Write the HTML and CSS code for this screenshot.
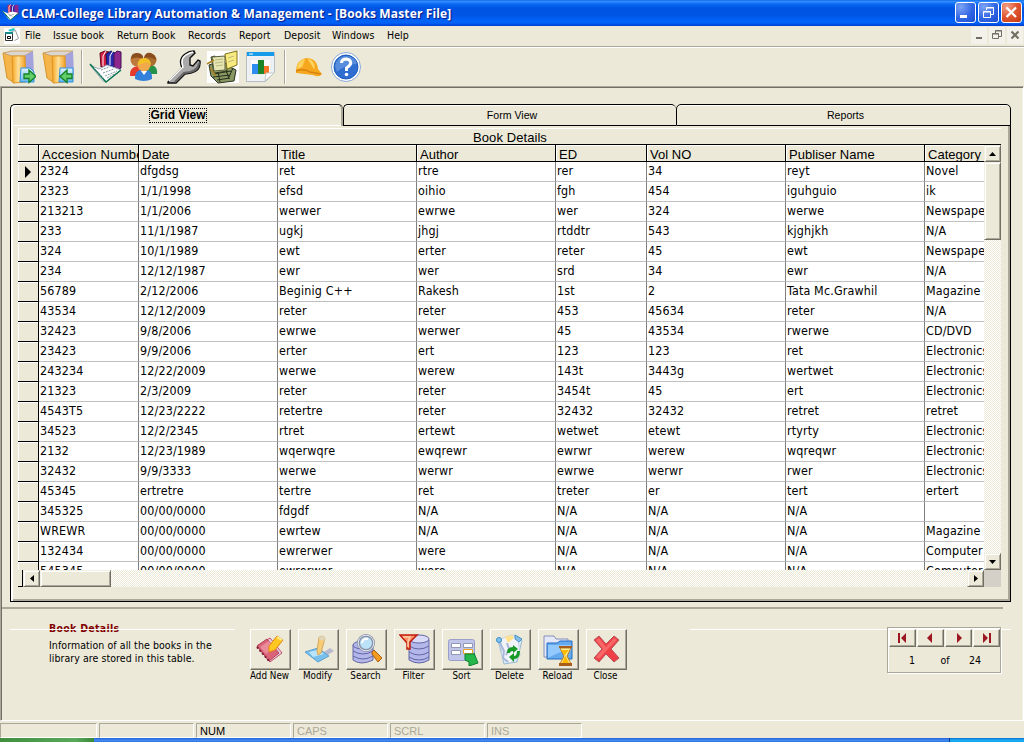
FILE: index.html
```html
<!DOCTYPE html>
<html lang="en">
<head>
<meta charset="utf-8">
<title>CLAM-College Library Automation &amp; Management</title>
<link rel="stylesheet" href="styles.css">
</head>
<body>
<div class="window">
<header class="titlebar">
  <svg class="app-icon" width="17" height="17" viewBox="0 0 34 34"><path d="M11 3l5-2 4 1v16l-8-1z" fill="#d51c40"/><path d="M17 4l5-3 4 2v16l-8-2z" fill="#2927ac"/><path d="M25 4l3-3 5 2v18l-8 2z" fill="#8c278e"/><path d="M17 1l-3 5v10M24 1l-3 5v9" stroke="#fff" stroke-width="1.500" fill="none"/><path d="M1 14l9 4 11-3 12 3-16 14-3-1z" fill="#fff"/><path d="M1 14l16 18 16-14" fill="none" stroke="#06764e" stroke-width="2"/><path d="M11 19l10 6M14 24l10-4" stroke="#899" stroke-width="1.500"/></svg>
  <span class="title">CLAM-College Library Automation &amp; Management - [Books Master File]</span>
  <div class="caption-buttons">
    <span class="cap"><svg width="19" height="19"><path d="M4 12h7v3H4z" fill="#fff"/></svg></span>
    <span class="cap"><svg width="19" height="19" fill="none" stroke="#fff"><path d="M7.500 7V4.500h7v7H12M7 5h8M4.500 8.500h7v6h-7zM4 9h8"/></svg></span>
    <span class="cap cap-close"><svg width="19" height="19"><path d="M4.500 4.500l9.500 9.500M14 4.500L4.500 14" stroke="#fff" stroke-width="2.300"/></svg></span>
  </div>
</header>
<nav class="menubar">
  <svg class="doc-icon" width="16" height="16"><path fill="#fff" d="M0 0h16v16H0z"/><path d="M7.500 3.500l4-1 3 8-4 2" fill="#fff" stroke="#999"/><path d="M4 2l6-2 1 2-5 1.500z" fill="#20c8c8"/><path d="M1.500 4.500h7v8h-7z" fill="#fff" stroke="#333"/><path d="M1 4h8v2H1z" fill="#178a8a"/><path d="M3.500 8.500h3v2h-3z" fill="#fff" stroke="#000"/></svg>
  <div class="menus"><span>File</span><span>Issue book</span><span>Return Book</span><span>Records</span><span>Report</span><span>Deposit</span><span>Windows</span><span>Help</span></div>
  <div class="mdi">
    <span><svg width="16" height="16"><path d="M5 10h6v2H5z" fill="#716f64"/></svg></span>
    <span><svg width="16" height="16" fill="none" stroke="#716f64"><path d="M6.500 6V3.500h6v6H10M6 4h7M3.500 6.500h6v5h-6zM3 7h7"/></svg></span>
    <span><svg width="16" height="16"><path d="M4.500 4.500l7 7M11.500 4.500l-7 7" stroke="#716f64" stroke-width="2.200"/></svg></span>
  </div>
</nav>
<div class="toolbar">
  <svg width="34" height="34" viewBox="0 0 34 34"><defs><linearGradient id="or" x2="1" y2="0"><stop stop-color="#f5a31c"/><stop offset=".45" stop-color="#ffe09a"/><stop offset="1" stop-color="#f09a18"/></linearGradient><linearGradient id="bl" x2="0" y2="1"><stop stop-color="#e0f4ff"/><stop offset="1" stop-color="#66b5ee"/></linearGradient></defs><path d="M1 3l10 3v26l-6-4z" fill="#f6b54a" stroke="#d99428"/><path d="M1 3l9-2h21l-9 5H10z" fill="#dcd6d2" stroke="#c9a568"/><path d="M22 6l9-5 1 23-10 8z" fill="#a3a2dc"/><path d="M10 6h13l1 26-13 1z" fill="url(#or)" stroke="#dd9826"/><path d="M19 18h9l4 4v10H18z" fill="url(#bl)" stroke="#2b91e0"/><path d="M22 24h5v-4l7 6.500-7 6v-4h-5z" fill="#63cd68" stroke="#128229" stroke-width="1.300"/></svg>
  <svg width="34" height="34" viewBox="0 0 34 34"><path d="M1 3l10 3v26l-6-4z" fill="#f6b54a" stroke="#d99428"/><path d="M1 3l9-2h21l-9 5H10z" fill="#dcd6d2" stroke="#c9a568"/><path d="M22 6l9-5 1 23-10 8z" fill="#a3a2dc"/><path d="M10 6h13l1 26-13 1z" fill="url(#or)" stroke="#dd9826"/><path d="M18 18h13v14H17z" fill="url(#bl)" stroke="#2b91e0"/><path d="M30 24h-5v-4l-7 6.500 7 6v-4h5z" fill="#63cd68" stroke="#128229" stroke-width="1.300"/></svg>
  <i class="sep"></i>
  <svg width="34" height="34" viewBox="0 0 34 34"><path d="M11 3l5-2 4 1v16l-8-1z" fill="#d51c40" stroke="#600820"/><path d="M17 4l5-3 4 2v16l-8-2z" fill="#2927ac" stroke="#171650"/><path d="M25 4l3-3 4 1v16l-7 4z" fill="#8c278e" stroke="#451055"/><path d="M17 1l-3 5v10M24 1l-3 5v9" stroke="#fff" fill="none"/><path d="M1 15l9 4 8-4 14 5-15 12-3-1z" fill="#fff" stroke="#9ab"/><path d="M1 14l16 18 15-12" fill="none" stroke="#06764e" stroke-width="1.500"/><path d="M12 20l8-3M14 23l11-4M16 26l12-5M18 28l9-5M5 18l9 10" stroke="#899" fill="none" stroke-dasharray="2 1"/></svg>
  <svg width="32" height="34" viewBox="0 0 32 34"><path d="M2 26q-1-9 8-10 7 1 8 10z" fill="#e53c2b"/><path d="M16 24q1-9 8-9 6 2 5 9z" fill="#249248"/><circle cx="9" cy="10" r="6.500" fill="#be7a3b"/><circle cx="22" cy="10" r="6.500" fill="#ab6d30"/><path d="M3 9q0-7 7-6 6 1 5 6-6-3-12 0M16 8q1-6 7-5 5 2 5 7-6-4-12-2" fill="#8b4d1d"/><path d="M7 29q-1-9 9-10 9 1 8 10-8 4-17 0" fill="#3380da"/><circle cx="16" cy="15" r="6.500" fill="#f2a94e"/><path d="M10 15q0-8 7-7 6 1 6 7l-4-3z" fill="#f2c126"/><path d="M13 21l3 4 3-4" fill="#fff"/></svg>
  <svg width="34" height="34" viewBox="0 0 34 34"><path d="M1 32L15 18q-4-9 3-14 4-3 9-3l1 2-5 5v7l3 1 5-6 2 1q1 10-9 12l-6 1-9 9H1z" fill="#a9a9a9" stroke="#111" stroke-width="1.400"/><path d="M2 31l14-14q-3-8 3-12 3-2 7-3" stroke="#fff" stroke-width="1.500" fill="none"/><path d="M8 32l9-9 6-1q8-2 9-9" stroke="#666" stroke-width="2" fill="none"/></svg>
  <svg width="34" height="34" viewBox="0 0 34 34"><path fill="#fff" d="M1 1h32v32H1z"/><path d="M3 15l6-2 13 3 8 4-2 11-16 2-7-7z" fill="#8b9864" stroke="#26301c"/><path d="M5 7l4-1 2 3 10 5v7l-13 2z" fill="#a6b16b" stroke="#3f4727"/><path d="M6 7l13-1v14l-11 1z" fill="#e6e6b4" stroke="#585d44"/><path d="M19 4l12-3v14l-10 4z" fill="#f8ec80" stroke="#817019"/><path d="M8 24l17-3M7 27l17-2M11 30l13-2M20 20l3 9M12 22l2 10M27 18l-4 9" stroke="#222e18"/><path d="M1 14l7-4M4 18l6 8" stroke="#a98222" stroke-width="1.500"/><path d="M9 10l8-1M9 13l8-1M10 16l7-1M22 8l6-2M22 12l6-2" stroke="#bcb97f"/></svg>
  <svg width="34" height="34" viewBox="0 0 34 34"><path d="M1.500 2.500h28v20l-9 9h-19z" fill="#eef2f4" stroke="#b5bcc2"/><path d="M2 2h27v4H2z" fill="#159be9"/><path d="M4 4h4" stroke="#fff"/><path d="M5 9h21v15H5z" fill="#fafbfc" stroke="#e3e7e9"/><path d="M7 14h6v10H7z" fill="#2f8cf0"/><path d="M13 10h6v14h-6z" fill="#1d8428"/><path d="M19 16h5v8h-5z" fill="#f77429"/><path d="M20 31l1-8h8z" fill="#fff" stroke="#c4c9cc"/></svg>
  <i class="sep"></i>
  <svg width="34" height="34" viewBox="0 0 34 34"><path d="M4 22Q4 10 14 8q11 0 12 11l4 5q-3 4-9 1L4 23z" fill="#f5a81d"/><path d="M5 19Q6 10 13 9l-3 8M15 8l4 2q5 4 3 9" fill="#ffd461" stroke="#ffc344"/><path d="M4 21q8-3 14 1l11 2" stroke="#d98111" stroke-width="1.500" fill="none"/></svg>
  <svg width="34" height="34" viewBox="0 0 34 34"><circle cx="15" cy="17" r="14.500" fill="#fff" stroke="#8aa9dc"/><circle cx="15" cy="17" r="12" fill="#2f6dd0" stroke="#1c5bbb"/><path d="M4 16q2-10 11-10t11 8q-11 0-20 8z" fill="#81aee9" opacity=".5"/><path d="M10.500 13q0-4 5-4 5 1 4 5-1 2-4 4v3" fill="none" stroke="#fff" stroke-width="3"/><circle cx="15.500" cy="24.500" r="1.800" fill="#fff"/></svg>
</div>
<main class="client">
  <section class="tabs">
    <div class="tab-row"><div class="tab active"><b>Grid View</b></div><div class="tab">Form View</div><div class="tab">Reports</div></div>
    <div class="tab-body">
      <div class="datagrid">
        <div class="grid-caption">Book Details</div>
        <div class="grid-main">
          <div class="grid-left">
          <div class="table">
            <div class="row head"><i></i><span>Accesion Number</span><span>Date</span><span>Title</span><span>Author</span><span>ED</span><span>Vol NO</span><span>Publiser Name</span><span>Category</span></div>
            <div class="row"><i><svg width="7" height="12"><path d="M0 0l6 6-6 6z"/></svg></i><span>2324</span><span>dfgdsg</span><span>ret</span><span>rtre</span><span>rer</span><span>34</span><span>reyt</span><span>Novel</span></div>
            <div class="row"><i></i><span>2323</span><span>1/1/1998</span><span>efsd</span><span>oihio</span><span>fgh</span><span>454</span><span>iguhguio</span><span>ik</span></div>
            <div class="row"><i></i><span>213213</span><span>1/1/2006</span><span>werwer</span><span>ewrwe</span><span>wer</span><span>324</span><span>werwe</span><span>Newspaper</span></div>
            <div class="row"><i></i><span>233</span><span>11/1/1987</span><span>ugkj</span><span>jhgj</span><span>rtddtr</span><span>543</span><span>kjghjkh</span><span>N/A</span></div>
            <div class="row"><i></i><span>324</span><span>10/1/1989</span><span>ewt</span><span>erter</span><span>reter</span><span>45</span><span>ewt</span><span>Newspaper</span></div>
            <div class="row"><i></i><span>234</span><span>12/12/1987</span><span>ewr</span><span>wer</span><span>srd</span><span>34</span><span>ewr</span><span>N/A</span></div>
            <div class="row"><i></i><span>56789</span><span>2/12/2006</span><span>Beginig C++</span><span>Rakesh</span><span>1st</span><span>2</span><span>Tata Mc.Grawhil</span><span>Magazine</span></div>
            <div class="row"><i></i><span>43534</span><span>12/12/2009</span><span>reter</span><span>reter</span><span>453</span><span>45634</span><span>reter</span><span>N/A</span></div>
            <div class="row"><i></i><span>32423</span><span>9/8/2006</span><span>ewrwe</span><span>werwer</span><span>45</span><span>43534</span><span>rwerwe</span><span>CD/DVD</span></div>
            <div class="row"><i></i><span>23423</span><span>9/9/2006</span><span>erter</span><span>ert</span><span>123</span><span>123</span><span>ret</span><span>Electronics</span></div>
            <div class="row"><i></i><span>243234</span><span>12/22/2009</span><span>werwe</span><span>werew</span><span>143t</span><span>3443g</span><span>wertwet</span><span>Electronics</span></div>
            <div class="row"><i></i><span>21323</span><span>2/3/2009</span><span>reter</span><span>reter</span><span>3454t</span><span>45</span><span>ert</span><span>Electronics</span></div>
            <div class="row"><i></i><span>4543T5</span><span>12/23/2222</span><span>retertre</span><span>reter</span><span>32432</span><span>32432</span><span>retret</span><span>retret</span></div>
            <div class="row"><i></i><span>34523</span><span>12/2/2345</span><span>rtret</span><span>ertewt</span><span>wetwet</span><span>etewt</span><span>rtyrty</span><span>Electronics</span></div>
            <div class="row"><i></i><span>2132</span><span>12/23/1989</span><span>wqerwqre</span><span>ewqrewr</span><span>ewrwr</span><span>werew</span><span>wqreqwr</span><span>Electronics</span></div>
            <div class="row"><i></i><span>32432</span><span>9/9/3333</span><span>werwe</span><span>werwr</span><span>ewrwe</span><span>werwr</span><span>rwer</span><span>Electronics</span></div>
            <div class="row"><i></i><span>45345</span><span>ertretre</span><span>tertre</span><span>ret</span><span>treter</span><span>er</span><span>tert</span><span>ertert</span></div>
            <div class="row"><i></i><span>345325</span><span>00/00/0000</span><span>fdgdf</span><span>N/A</span><span>N/A</span><span>N/A</span><span>N/A</span><span></span></div>
            <div class="row"><i></i><span>WREWR</span><span>00/00/0000</span><span>ewrtew</span><span>N/A</span><span>N/A</span><span>N/A</span><span>N/A</span><span>Magazine</span></div>
            <div class="row"><i></i><span>132434</span><span>00/00/0000</span><span>ewrerwer</span><span>were</span><span>N/A</span><span>N/A</span><span>N/A</span><span>Computer</span></div>
            <div class="row"><i></i><span>545345</span><span>00/00/0000</span><span>ewrerwer</span><span>were</span><span>N/A</span><span>N/A</span><span>N/A</span><span>Computer</span></div>
          </div>
          <div class="hscroll"><i class="split"></i><span class="sbtn"><svg width="4" height="7"><path d="M4 0v7L0 3.500z"/></svg></span><span class="sbtn hthumb"></span><span class="track"></span><span class="sbtn"><svg width="4" height="7"><path d="M0 0v7l4-3.500z"/></svg></span></div>
          </div>
          <div class="vscroll"><span class="sbtn"><svg width="7" height="4"><path d="M0 4h7L3.500 0z"/></svg></span><span class="sbtn vthumb"></span><span class="track"></span><span class="sbtn"><svg width="7" height="4"><path d="M0 0h7L3.500 4z"/></svg></span><i class="corner"></i></div>
        </div>
      </div>
    </div>
  </section>
  <section class="footer">
    <div class="about"><h2>Book Details</h2><p>Information of all the books in the<br>library are stored in this table.</p></div>
    <div class="actions">
      <div class="action"><button><svg width="32" height="32"><path d="M2 12l13-8 12 15-12 9z" fill="#e4d2e6" stroke="#c04a62"/><path d="M2 12l10-7 12 14-10 8z" fill="#dc6478" stroke="#b53b54"/><path d="M5 13l9-6 5 6-8 7z" fill="#e98b98"/><path d="M2 13l12 14" stroke="#7b2035" stroke-width="2" stroke-dasharray="2 2"/><path d="M14 12L22 2l6 4-8 10-6 2z" fill="#ffc721" stroke="#e58516"/><path d="M22 3l5 3" stroke="#fff19a" stroke-width="2"/></svg></button><span>Add New</span></div>
      <div class="action"><button><svg width="32" height="32"><path d="M21 18l6-4 4 3-8 5z" fill="#b8b8cf"/><path d="M2 18l13-4 11 8-11 6z" fill="#78bfeb" stroke="#5aa1d1"/><path d="M6 18l9-2 6 4-11 3z" fill="#bae4fa"/><path d="M14 17l2-14q4-2 6 1l-4 15-3 2z" fill="#f7cc75" stroke="#d4a85b"/><path d="M16 3q4-2 6 1l-1 3-5-2z" fill="#dfd7bd"/></svg></button><span>Modify</span></div>
      <div class="action"><button><svg width="32" height="32"><g fill="#b4b7ea" stroke="#6466a5"><path d="M2 11v15q8 6 20 0V11z"/><ellipse cx="12" cy="11" rx="10" ry="4"/><path d="M2 17q10 6 20 0M2 22q10 6 20 0" fill="none"/></g><path d="M21 18l2-2 8 8-4 4-6-8z" fill="#f39c21" stroke="#aa5c15"/><circle cx="15" cy="9" r="7.500" fill="#bce2f8" stroke="#8790a6" stroke-width="3"/><circle cx="15" cy="9" r="7.800" fill="none" stroke="#e5e8f1"/><path d="M11 9q1-5 6-4" stroke="#fff" stroke-width="2" fill="none"/></svg></button><span>Search</span></div>
      <div class="action"><button><svg width="32" height="32"><g fill="#b4b7ea" stroke="#6466a5"><path d="M10 6v20q10 6 20 0V6z"/><ellipse cx="20" cy="5" rx="10" ry="4" fill="#d9dbf9"/><path d="M10 12q10 6 20 0M10 18q10 6 20 0M10 23q10 6 20 0" fill="none"/></g><path d="M1 1h17l-7 7v7H8V9z" fill="#ff9068" stroke="#c11d0d" stroke-width="1.500"/><path d="M4 3h7l-2 5v5" fill="none" stroke="#ffd0a5" stroke-width="1.500"/></svg></button><span>Filter</span></div>
      <div class="action"><button><svg width="32" height="32"><rect x="1.500" y="5.500" width="26" height="21" rx="2" fill="#bfc6e9" stroke="#999fca"/><g fill="#fff" stroke="#9197b5"><path d="M4.500 9.500h9v4h-9zM16.500 9.500h9v4h-9zM4.500 16.500h9v4h-9z"/><path d="M16.500 15.500h9v4h-9z" stroke="#eaa51b"/></g><path d="M18 20h9v-1l4 10-9 3v-4l-4-2z" fill="#26b64a" stroke="#0b8334"/></svg></button><span>Sort</span></div>
      <div class="action"><button><svg width="32" height="32"><path d="M3 6h24l-5 22-13 2z" fill="#d8eefb" stroke="#9bb9d1"/><path d="M6 5l10-4 7 2 2 19-10 7-8-6z" fill="#f1f3fa" stroke="#c7d2df"/><path d="M10 3l7-2 2 3-6 5z" fill="#ffe28b"/><path d="M5 9l4 8-1 7 5 4M12 9l2 6-3 6" fill="none" stroke="#a9b8d8" stroke-width="2"/><circle cx="4" cy="6" r="2.500" fill="#7ec2ed" stroke="#398dc4"/><path d="M20 1l7 4-3 3-4-3z" fill="#84bde5" stroke="#4a93c8"/><path d="M12 19q0-6 6-6v-2l5 4-5 4v-2q-3 0-3 2zM25 17q0 8-6 8v3l-5-5 5-4v3q3 0 3-5z" fill="#159a25"/></svg></button><span>Delete</span></div>
      <div class="action"><button><svg width="32" height="32"><path d="M1 2h10l2 3h12v18H1z" fill="#e5e8f8" stroke="#8490bb"/><path d="M4 9h10l3-2h12v18H4z" fill="#65a9ef" stroke="#236dc1"/><path d="M5 11h23v6q-10-1-23 7z" fill="#93c9fd"/><path d="M17 14h11l-4 8 4 8H17l4-8z" fill="#fff0a0" stroke="#bd7a18"/><path d="M18 16h8l-4 5 4 8h-7l3-7z" fill="#ffb900"/><path d="M16 12h13v2H16zM16 29h13v3H16z" fill="#a85d1c"/></svg></button><span>Reload</span></div>
      <div class="action"><button><svg width="32" height="32"><path d="M3 6l5-4 7 8 8-8 5 4-8 9 8 9-5 4-8-8-7 8-5-4 8-9z" fill="#ee4046" stroke="#b85057"/><path d="M5 6l3-2 7 9 8-9 3 2-9 9-9 10-3-2 7-8z" fill="#ff8784" opacity=".55"/></svg></button><span>Close</span></div>
    </div>
    <div class="nav-group"><div class="pager">
      <div class="pager-buttons">
        <button><svg width="12" height="10"><path d="M1 0h2v10H1zM9 0v10L4 5z"/></svg></button><button><svg width="12" height="10"><path d="M7 0v10L2 5z"/></svg></button><button><svg width="12" height="10"><path d="M4 0v10l5-5z"/></svg></button><button><svg width="12" height="10"><path d="M2 0v10l5-5zM8 0h2v10H8z"/></svg></button>
      </div>
      <div class="pager-count"><span>1</span><span>of</span><span>24</span></div>
    </div></div>
  </section>
</main>
<footer class="statusbar"><span></span><span></span><span class="on">NUM</span><span>CAPS</span><span>SCRL</span><span>INS</span></footer>
<div class="taskbar"><i class="start"></i><i class="tasks"></i><i class="tray"></i></div>
</div>
</body>
</html>
```
FILE: styles.css
```css
* { box-sizing: border-box; }
body { margin: 0; overflow: hidden; }
svg { display: block; flex: none; }
.window {
  width: 1024px; height: 742px; display: flex; flex-direction: column;
  background: #ece9d8; color: #000;
  font: 10.5px/13px "DejaVu Sans Condensed", "DejaVu Sans", sans-serif;
}
.titlebar {
  height: 26px; flex: none; display: flex; align-items: center; padding: 0 2px 1px 2px;
  background: linear-gradient(#0058e6 0, #3a93ff 1px, #0a6af5 4px, #0054e3 8px, #0055e5 15px, #0264fa 21px, #0262f5 23px, #003dd0 26px);
}
.title {
  margin-left: 2px; flex: 1; white-space: nowrap; color: #fff; letter-spacing: .14px;
  font: bold 12px/18px "Open Sans", sans-serif; text-shadow: 1px 1px 1px #0a1883; padding-top: 2px;
}
.caption-buttons { display: flex; gap: 2px; }
.cap {
  width: 21px; height: 21px; border: 1px solid #fff; border-radius: 3px; overflow: hidden;
  background: radial-gradient(circle at 25% 20%, #7ea4f5, #3166e5 55%, #1b4fd0);
}
.cap-close { background: radial-gradient(circle at 25% 20%, #f0a088, #e05530 50%, #c13a12); }
.menubar { height: 22px; flex: none; display: flex; align-items: center; padding: 0 1px 2px 4px; border-bottom: 1px solid #fff; box-shadow: inset 0 -1px #aca899; }
.menus { display: grid; grid-template-columns: 28px 64px 71px 51px 45px 48px 55px 1fr; margin-left: 5px; flex: 1; white-space: nowrap; letter-spacing: .06px; }
.mdi { display: flex; gap: 2px; }
.mdi span { width: 16px; height: 17px; background: #f3f2ea; }
.toolbar {
  height: 38px; flex: none; display: grid; align-items: center; padding: 0 2px;
  grid-template-columns: 40px 39px 8px 39px 39px 39px 39px 39px 8px 39px 39px;
}
.sep { width: 2px; height: 34px; background: #aca899; border-right: 1px solid #fff; }
.client {
  height: 635px; flex: none; border: solid; border-width: 1px; padding: 17px 0 0 9px;
  border-color: #aca899 #fff #fff #aca899;
  box-shadow: inset 1px 1px #716f64, inset -1px 0 #f4f2e8;
}
.tabs { width: 1001px; height: 498px; }
.tab-row { display: grid; grid-template-columns: 333px 333px 335px; height: 21px; }
.tab {
  border: 1px solid #000; border-right: 0; border-radius: 5px 5px 0 0; text-align: center;
  box-shadow: inset 0 1px #fff; font: 10.6px/20px "Liberation Sans", sans-serif; padding-left: 4px;
}
.tab:last-child { border-right: 1px solid #000; }
.tab.active { border-bottom: 0; box-shadow: inset 2px 1px #fff, inset -2px 0 #aca899; padding-left: 2px; }
.tab.active b { outline: 1px dotted #000; font-size: 12px; line-height: 13px; display: inline-block; margin-top: 4px; }
.tab-body {
  height: 477px; padding: 3px 9px 0 7px; border: solid #000; border-width: 0 1px 1px;
  box-shadow: inset 2px 0 #fff, inset -2px -2px #aca899, inset 0 1px #fff;
}
.datagrid { width: 983px; height: 459px; display: flex; flex-direction: column; }
.grid-caption {
  height: 17px; border-top: 1px solid #fff; border-left: 1px solid #fff; border-bottom: 1px solid #000;
  text-align: center; font: 13px/18px "Liberation Sans", sans-serif; letter-spacing: .08px;
}
.grid-main { display: flex; height: 442px; }
.grid-left { width: 966px; }
.table { height: 425px; overflow: hidden; background: #fff; }
.row {
  display: grid; width: 1010px; height: 20px; font-size: 12.4px; line-height: 18px; letter-spacing: .16px;
  grid-template-columns: 21px 100px 139px 139px 139px 91px 139px 139px 103px;
}
.row span { padding-left: 1px; border-right: 1px solid #808080; border-bottom: 1px solid #c0c0c0; overflow: hidden; white-space: nowrap; }
.row i { background: #ece9d8; border-right: 1px solid #000; border-bottom: 1px solid #000; box-shadow: inset 1px 1px #fff; padding: 4px 0 0 7px; }
.head { height: 17px; font-family: "Liberation Sans", sans-serif; font-size: 13px; line-height: 19px; letter-spacing: .03px; }
.head span { background: #ece9d8; border-color: #000; box-shadow: inset 1px 1px #fff; padding-left: 3px; }
.head span:nth-child(2) { letter-spacing: .25px; }
.sbtn {
  width: 17px; height: 17px; flex: none; display: flex; align-items: center; justify-content: center; background: #ece9d8;
  border: 1px solid; border-color: #f1efe2 #716f64 #716f64 #f1efe2; box-shadow: inset 1px 1px #fff, inset -1px -1px #aca899;
}
.hscroll { height: 17px; display: flex; }
.split { width: 5px; border: solid #000; border-width: 0 1px 1px 0; }
.hthumb { width: 71px; }
.track { flex: 1; background: repeating-conic-gradient(#fff 0 25%, #ece9d8 0 50%) 0 0 / 2px 2px; }
.vscroll { width: 17px; display: flex; flex-direction: column; }
.vthumb { height: 78px; }
.corner { height: 17px; background: #d4d0c8; }
.footer { margin: 5px 0 0 -8px; width: 1020px; height: 112px; display: flex; padding-left: 8px; background: linear-gradient(#aca899, #aca899) 0 0 / 1001px 2px no-repeat; }
.about { position: relative; width: 225px; padding: 15px 0 0 39px; }
.about::before { content: ""; position: absolute; left: 0; right: 0; top: 22px; height: 1px; background: #fff; }
.about h2 { margin: 0; color: #800000; font-size: 10.5px; line-height: 13px; letter-spacing: .28px; }
.about p { margin: 4px 0 0; white-space: nowrap; letter-spacing: .07px; }
.actions { display: flex; gap: 7px; margin: 22px 0 0 15px; height: 55px; }
.action { width: 41px; white-space: nowrap; display: flex; flex-direction: column; align-items: center; font-size: 9.8px; line-height: 11px; }
.action > span { margin-right: 2px; }
.action button, .pager button {
  width: 41px; height: 41px; padding: 0; display: flex; align-items: center; justify-content: center; flex: none; background: #ece9d8;
  border: 1px solid; border-color: #fff #716f64 #716f64 #fff; box-shadow: inset -1px -1px #aca899;
}
.nav-group { width: 321px; margin-left: 63px; padding: 20px 0 0 197px; background: linear-gradient(#fff, #fff) 0 22px / 100% 1px no-repeat; }
.pager { width: 114px; height: 46px; background: #ece9d8; border: 1px solid #aca899; box-shadow: 1px 1px #fff, inset 1px 1px #fff; padding: 1px; }
.pager-buttons { display: flex; gap: 1px; }
.pager button { width: 27px; height: 18px; }
.pager button svg { fill: #9c1720; }
.pager-count { display: grid; grid-template-columns: 46px 20px 40px; text-align: center; padding-top: 7px; }
.statusbar { height: 17px; flex: none; display: flex; gap: 2px; padding-top: 2px; }
.statusbar span { width: 95px; height: 15px; border: 1px solid; border-color: #aca899 #fff #fff #aca899; color: #aca899; padding-left: 3px; line-height: 14px; font-family: "Liberation Sans", sans-serif; font-size: 11px; }
.statusbar span:first-child { width: 97px; }
.statusbar .on { color: #000; }
.taskbar { height: 4px; flex: none; display: flex; }
.start { width: 94px; background: linear-gradient(90deg, #3f8f3f, #5aa85a 80%, #3a8a3a); }
.tasks { flex: 1; background: linear-gradient(#2a62d8, #3f8cf0 60%, #2f70e0); }
.tray { width: 75px; background: linear-gradient(#0f6fd0, #19b0f5 60%, #12a0ea); border-left: 1px solid #0a3a90; }
```
